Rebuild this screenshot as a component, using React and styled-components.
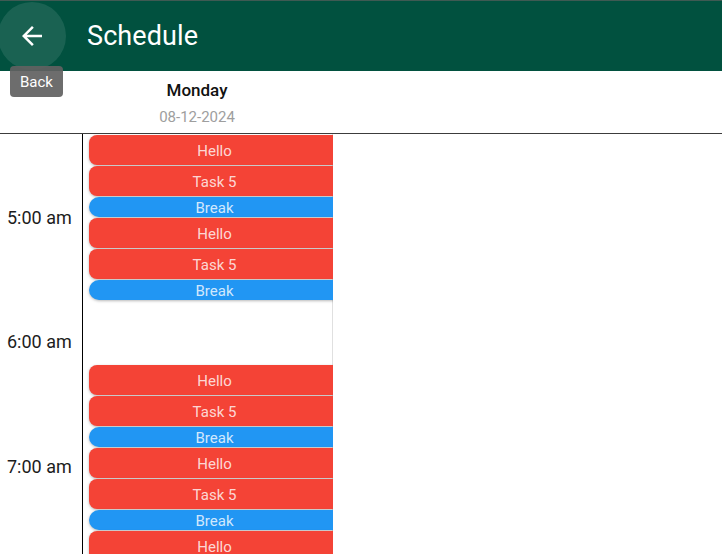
import React from "react";
import styled, { createGlobalStyle } from "styled-components";

const GlobalStyle = createGlobalStyle`
    html, body {
        margin: 0;
        padding: 0;
        height: 100%;
        overflow: hidden;
        background: #ffffff;
        font-family: Roboto, "Noto Sans", Arial, sans-serif;
    }
    #root {
        height: 100%;
    }
`

const Page = styled.div`
    height: 100%;
    display: flex;
    flex-direction: column;
    overflow: hidden;
`
const AppBar = styled.header`
    position: relative;
    height: 70px;
    flex-shrink: 0;
    display: flex;
    align-items: center;
    background-color: #01513f;
    border-top: 1px solid #3f5a53;
`
const BackButton = styled.button`
    width: 68px;
    height: 68px;
    margin-left: -2px;
    border: none;
    border-radius: 50%;
    padding: 0;
    display: flex;
    align-items: center;
    justify-content: center;
    background-color: rgba(255, 255, 255, 0.1);
    color: #ffffff;
    cursor: pointer;
`
const Title = styled.h1`
    margin: 0 0 0 21px;
    font-size: 27px;
    font-weight: 400;
    color: #ffffff;
    letter-spacing: 0.1px;
`
const Tooltip = styled.div`
    position: absolute;
    left: 10px;
    top: 65px;
    width: 53px;
    height: 31px;
    display: flex;
    align-items: center;
    justify-content: center;
    border-radius: 4px;
    background-color: rgba(97, 97, 97, 0.92);
    color: #ffffff;
    font-size: 15px;
    z-index: 2;
`
const DayHeader = styled.div`
    height: 62px;
    flex-shrink: 0;
    display: flex;
    border-bottom: 1px solid #3c3c3c;
`
const HeaderGutter = styled.div`
    width: 83px;
`
const DayCell = styled.div`
    width: 228px;
    display: flex;
    flex-direction: column;
    align-items: center;
    padding-top: 9px;
`
const DayName = styled.span`
    font-size: 17px;
    font-weight: 500;
    color: #111111;
`
const DayDate = styled.span`
    margin-top: 8px;
    font-size: 15px;
    color: #9e9e9e;
`
const Body = styled.div`
    flex: 1;
    display: flex;
    min-height: 0;
`
const TimeColumn = styled.div`
    width: 82px;
    flex-shrink: 0;
    padding-top: 21px;
    border-right: 1px solid #000000;
`
const TimeSlot = styled.div`
    height: 124.5px;
    display: flex;
    align-items: center;
    padding-left: 7px;
    font-size: 18px;
    color: #1c1c1c;
`
const DayColumn = styled.div`
    width: 250px;
    flex-shrink: 0;
    overflow: hidden;
    padding: 1px 0 0 6px;
    box-sizing: border-box;
    box-shadow: inset -1px 0 0 #e0e0e0;
`
const Group = styled.div`
    display: flex;
    flex-direction: column;
    gap: 1px;
    padding-bottom: 1px;
`
const Spacer = styled.div`
    height: 64px;
`
const Event = styled.div`
    width: 251px;
    height: ${props => props.kind === "break" ? "20px" : "30px"};
    box-sizing: border-box;
    padding-top: 2px;
    display: flex;
    align-items: center;
    justify-content: center;
    border-radius: ${props => props.kind === "break" ? "10px" : "8px"} 0 0 ${props => props.kind === "break" ? "10px" : "8px"};
    background-color: ${props => props.kind === "break" ? "#2196f3" : "#f44336"};
    color: rgba(255, 255, 255, 0.8);
    font-size: 15px;
    box-shadow: 0 1px 3px rgba(0, 0, 0, 0.28);
`

const BackArrow = () => (
    <svg width="30" height="30" viewBox="0 0 24 24" fill="currentColor">
        <path d="M20 11H7.83l5.59-5.59L12 4l-8 8 8 8 1.41-1.41L7.83 13H20v-2z" />
    </svg>
)

const EventGroup = () => (
    <Group>
        <Event>Hello</Event>
        <Event>Task 5</Event>
        <Event kind="break">Break</Event>
    </Group>
)

const App = () => {
    return (
        <Page>
            <GlobalStyle />
            <AppBar>
                <BackButton aria-label="Back">
                    <BackArrow />
                </BackButton>
                <Title>Schedule</Title>
                <Tooltip>Back</Tooltip>
            </AppBar>
            <DayHeader>
                <HeaderGutter />
                <DayCell>
                    <DayName>Monday</DayName>
                    <DayDate>08-12-2024</DayDate>
                </DayCell>
            </DayHeader>
            <Body>
                <TimeColumn>
                    <TimeSlot>5:00 am</TimeSlot>
                    <TimeSlot>6:00 am</TimeSlot>
                    <TimeSlot>7:00 am</TimeSlot>
                </TimeColumn>
                <DayColumn>
                    <EventGroup />
                    <EventGroup />
                    <Spacer />
                    <EventGroup />
                    <EventGroup />
                    <EventGroup />
                </DayColumn>
            </Body>
        </Page>
    )
}
export default App
